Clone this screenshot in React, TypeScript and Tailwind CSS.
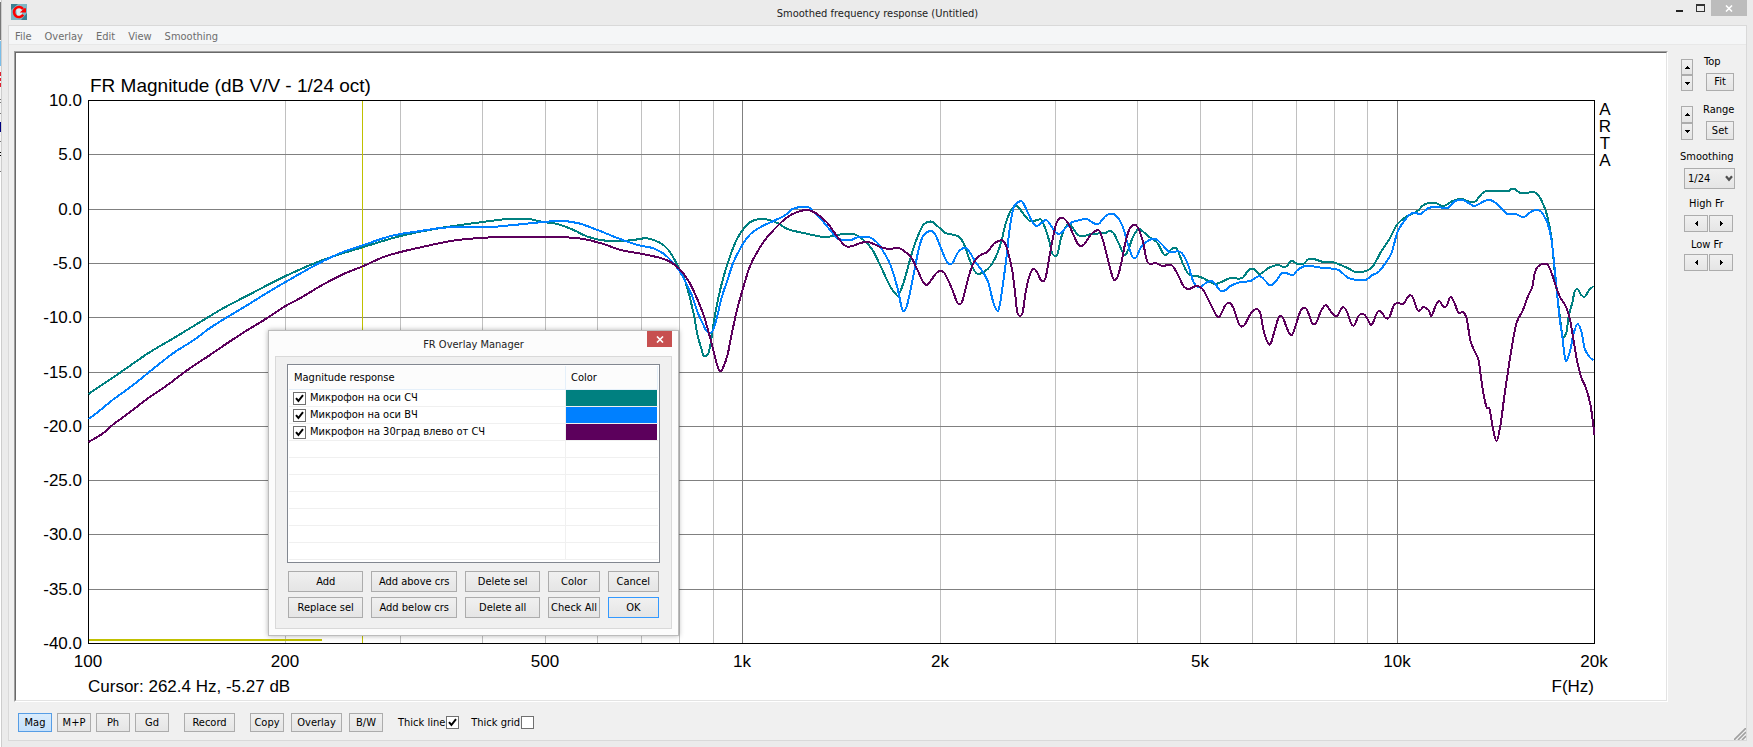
import React from "react";

type Point = [number, number];

interface Overlay {
  name: string;
  color: string;
  points: Point[];
}

const PLOT = { left: 88, right: 1594, top: 100, bottom: 643 };
const DECADE = (PLOT.right - PLOT.left) / Math.log10(200);

const overlays: Overlay[] = [
  {
    name: "Микрофон на оси СЧ",
    color: "#008080",
    points: [
      [88, 394], [122, 371], [148, 353], [175, 337], [208, 317], [223, 308], [250, 294], [285, 276],
      [325, 259], [363, 247], [400, 236], [440, 228], [482, 222], [507, 219], [518, 219], [528, 219],
      [543, 222], [557, 224], [573, 230], [588, 237], [607, 241], [622, 241], [640, 239], [645, 238], [658, 242],
      [668, 250], [678, 267], [685, 282], [693, 313], [697, 335], [701, 349], [703, 356], [708, 353], [711, 338],
      [714, 318], [718, 297], [723, 277], [730, 255], [737, 238], [743, 229], [750, 222], [758, 219], [765, 219],
      [777, 223], [787, 229], [803, 233], [823, 237], [833, 236], [842, 234], [853, 234], [863, 240], [872, 250],
      [880, 266], [890, 287], [896, 295], [898, 295], [903, 283], [910, 258], [915, 242], [922, 226], [927, 222],
      [932, 222], [938, 227], [945, 233], [957, 236], [963, 243], [968, 257], [974, 271], [979, 274], [990, 266],
      [997, 253], [1001, 241], [1005, 224], [1010, 211], [1014, 206], [1017, 206], [1023, 214], [1029, 221],
      [1033, 221], [1037, 220], [1041, 220], [1045, 229], [1049, 242], [1052, 254], [1057, 254], [1060, 240],
      [1064, 229], [1069, 224], [1075, 232], [1079, 236], [1084, 236], [1090, 234], [1105, 233], [1109, 231],
      [1113, 233], [1118, 243], [1124, 255], [1128, 249], [1132, 238], [1138, 229], [1143, 232], [1150, 238],
      [1157, 243], [1163, 254], [1167, 254], [1171, 249], [1176, 248], [1179, 255], [1183, 265], [1188, 274],
      [1200, 277], [1210, 282], [1215, 284], [1223, 281], [1230, 278], [1242, 278], [1248, 270], [1253, 269],
      [1259, 274], [1268, 268], [1277, 265], [1285, 267], [1291, 261], [1297, 264], [1303, 264], [1308, 259],
      [1313, 259], [1323, 262], [1332, 262], [1347, 268], [1355, 272], [1362, 272], [1371, 268], [1375, 262],
      [1381, 251], [1389, 239], [1397, 224], [1407, 216], [1417, 211], [1423, 205], [1429, 203], [1435, 203],
      [1443, 206], [1452, 201], [1461, 199], [1467, 201], [1474, 202], [1482, 193], [1487, 191], [1508, 191],
      [1511, 189], [1514, 189], [1520, 193], [1527, 193], [1531, 192], [1537, 194], [1543, 205], [1547, 217],
      [1551, 238], [1554, 270], [1557, 298], [1560, 322], [1562, 336], [1566, 332], [1568, 317], [1572, 302],
      [1574, 292], [1577, 289], [1580, 294], [1584, 297], [1588, 291], [1593, 286],
    ],
  },
  {
    name: "Микрофон на оси ВЧ",
    color: "#0080ff",
    points: [
      [88, 419], [100, 410], [112, 400], [130, 387], [150, 371], [173, 353], [195, 339], [208, 329],
      [227, 317], [247, 305], [263, 295], [285, 282], [317, 264], [340, 253], [363, 245], [387, 237], [400, 234],
      [420, 231], [440, 228], [457, 227], [490, 227], [513, 225], [533, 223], [558, 221], [577, 223], [597, 230],
      [617, 238], [637, 245], [652, 248], [662, 253], [670, 260], [679, 271], [685, 282], [692, 297], [697, 312],
      [702, 323], [706, 331], [710, 333], [713, 329], [717, 315], [721, 298], [727, 280], [733, 262], [743, 243],
      [750, 234], [762, 226], [773, 221], [785, 215], [792, 209], [800, 207], [808, 207], [813, 212], [823, 222],
      [832, 233], [838, 239], [850, 240], [858, 237], [868, 237], [875, 241], [880, 247], [890, 265], [897, 288],
      [902, 310], [906, 307], [910, 290], [914, 270], [918, 250], [922, 237], [927, 232], [931, 231], [935, 235],
      [940, 247], [945, 259], [948, 264], [952, 263], [957, 253], [963, 248], [967, 249], [975, 262], [983, 273],
      [988, 283], [993, 303], [998, 310], [1002, 287], [1006, 257], [1009, 230], [1013, 208], [1018, 202],
      [1022, 202], [1027, 212], [1032, 222], [1036, 226], [1041, 223], [1045, 220], [1048, 222], [1054, 231],
      [1059, 234], [1065, 228], [1072, 222], [1080, 220], [1086, 219], [1093, 223], [1098, 224], [1105, 216],
      [1110, 214], [1115, 215], [1122, 226], [1127, 243], [1132, 257], [1136, 257], [1140, 248], [1147, 241],
      [1155, 239], [1162, 245], [1169, 252], [1180, 252], [1187, 263], [1193, 282], [1199, 287], [1207, 282],
      [1213, 282], [1220, 291], [1225, 290], [1230, 286], [1240, 282], [1250, 281], [1259, 276], [1265, 281],
      [1269, 285], [1274, 283], [1282, 273], [1293, 275], [1297, 270], [1305, 266], [1323, 268], [1338, 270],
      [1348, 278], [1365, 280], [1372, 275], [1378, 272], [1385, 263], [1391, 253], [1397, 232], [1403, 222],
      [1410, 214], [1415, 213], [1420, 214], [1428, 208], [1437, 207], [1447, 208], [1455, 201], [1462, 200],
      [1468, 203], [1474, 206], [1482, 202], [1488, 200], [1494, 202], [1507, 214], [1515, 214], [1523, 217],
      [1532, 211], [1540, 211], [1544, 217], [1547, 223], [1551, 240], [1555, 277], [1559, 317], [1562, 338],
      [1565, 360], [1569, 353], [1573, 334], [1577, 324], [1581, 332], [1584, 348], [1589, 357], [1593, 360],
    ],
  },
  {
    name: "Микрофон на 30град влево от СЧ",
    color: "#5c005c",
    points: [
      [88, 442], [103, 433], [112, 425], [127, 414], [148, 398], [167, 385], [187, 370],
      [208, 356], [227, 343], [247, 330], [262, 321], [285, 306], [300, 298], [320, 286], [343, 274],
      [363, 266], [383, 257], [400, 252], [417, 248], [440, 243], [457, 240], [480, 238], [500, 237], [557, 237],
      [583, 239], [603, 244], [620, 250], [642, 254], [660, 258], [670, 262], [679, 269], [688, 281], [695, 295],
      [702, 312], [707, 328], [712, 347], [716, 363], [719, 371], [722, 369], [727, 355], [731, 335], [736, 312],
      [742, 290], [750, 265], [763, 242], [775, 228], [787, 217], [797, 212], [807, 210], [815, 213], [827, 223],
      [837, 237], [845, 246], [852, 246], [860, 243], [868, 242], [880, 247], [888, 249], [898, 248], [905, 252],
      [911, 258], [917, 270], [922, 281], [926, 285], [930, 281], [937, 272], [943, 272], [947, 279], [952, 290],
      [957, 303], [961, 303], [964, 293], [968, 277], [973, 263], [980, 255], [987, 252], [993, 244], [998, 241],
      [1003, 241], [1007, 250], [1012, 272], [1015, 297], [1017, 313], [1022, 313], [1025, 293], [1029, 276],
      [1033, 269], [1037, 273], [1041, 281], [1045, 278], [1048, 262], [1052, 240], [1056, 223], [1060, 218],
      [1063, 218], [1068, 224], [1073, 235], [1078, 245], [1083, 245], [1090, 235], [1095, 231], [1099, 231],
      [1103, 242], [1108, 262], [1113, 279], [1117, 277], [1121, 262], [1125, 242], [1129, 229], [1133, 225],
      [1137, 227], [1142, 240], [1147, 262], [1155, 263], [1162, 266], [1171, 265], [1177, 274], [1183, 286],
      [1188, 289], [1196, 286], [1202, 289], [1208, 300], [1217, 317], [1220, 315], [1225, 305], [1229, 303],
      [1233, 308], [1239, 325], [1244, 325], [1250, 314], [1256, 309], [1260, 314], [1263, 330], [1267, 342],
      [1270, 344], [1274, 331], [1278, 318], [1282, 317], [1286, 327], [1290, 335], [1293, 332], [1300, 311],
      [1305, 308], [1309, 316], [1312, 324], [1316, 322], [1320, 312], [1325, 305], [1328, 308], [1333, 315],
      [1337, 316], [1340, 310], [1343, 307], [1347, 313], [1351, 324], [1354, 325], [1358, 316], [1363, 314],
      [1367, 319], [1371, 325], [1377, 312], [1381, 312], [1385, 318], [1389, 317], [1393, 306], [1397, 303],
      [1403, 304], [1408, 296], [1412, 297], [1417, 310], [1420, 310], [1423, 307], [1428, 310], [1431, 316],
      [1435, 306], [1439, 301], [1443, 307], [1446, 306], [1450, 297], [1454, 303], [1458, 313], [1462, 312],
      [1466, 318], [1470, 341], [1475, 353], [1478, 360], [1482, 388], [1486, 407], [1489, 409], [1492, 426],
      [1496, 441], [1500, 425], [1504, 395], [1508, 368], [1512, 343], [1516, 323], [1522, 311], [1528, 295],
      [1532, 286], [1534, 274], [1538, 266], [1546, 264], [1550, 270], [1555, 285], [1559, 296], [1566, 308],
      [1570, 322], [1573, 340], [1577, 363], [1581, 378], [1585, 387], [1590, 405], [1594, 435],
    ],
  },
];

const freqX = (f: number) => Math.round(PLOT.left + DECADE * Math.log10(f / 100)) + 0.5;
const dbY = (db: number) => Math.round(PLOT.top + ((10 - db) / 50) * (PLOT.bottom - PLOT.top)) + 0.5;

const gridFreqs = [200, 300, 400, 500, 600, 700, 800, 900, 1000, 2000, 3000, 4000, 5000, 6000, 7000, 8000, 9000, 10000];
const gridDbs = [5, 0, -5, -10, -15, -20, -25, -30, -35];
const freqLabels: [number, string][] = [
  [100, "100"], [200, "200"], [500, "500"], [1000, "1k"], [2000, "2k"], [5000, "5k"], [10000, "10k"], [20000, "20k"],
];

// Bezier through every sample
function tracePath(pts: Point[]) {
  let d = `M${pts[0][0] + 0.5} ${pts[0][1]}`;
  for (let i = 0; i < pts.length - 1; i++) {
    const p0 = pts[i - 1] || pts[i];
    const p1 = pts[i];
    const p2 = pts[i + 1];
    const p3 = pts[i + 2] || p2;
    const s1 = (p2[1] - p0[1]) / (p2[0] - p0[0]);
    const s2 = (p3[1] - p1[1]) / (p3[0] - p1[0]);
    const h = (p2[0] - p1[0]) / 3;
    d += `C${p1[0] + h + 0.5} ${p1[1] + s1 * h} ${p2[0] - h + 0.5} ${p2[1] - s2 * h} ${p2[0] + 0.5} ${p2[1]}`;
  }
  return d;
}

const btn =
  "flex items-center justify-center border border-[#acacac] bg-linear-to-b from-[#f0f0f0] to-[#e5e5e5] whitespace-nowrap text-black";

function Button({ className = "", children }: { className?: string; children: React.ReactNode }) {
  return (
    <button type="button" className={`${btn} ${className}`}>
      {children}
    </button>
  );
}

function ArrowButton({ dir, className = "" }: { dir: "up" | "down" | "left" | "right"; className?: string }) {
  const shapes = {
    up: "M1 5h5v-1h-1v-1h-1v-1h-1v1h-1v1h-1z",
    down: "M1 2h5v1h-1v1h-1v1h-1v-1h-1v-1h-1z",
    left: "M5 1v5h-1v-1h-1v-1h-1v-1h1v-1h1v-1z",
    right: "M2 1v5h1v-1h1v-1h1v-1h-1v-1h-1v-1z",
  };
  return (
    <button type="button" aria-label={dir} className={`${btn} ${className}`}>
      <svg width="7" height="7" viewBox="0 0 7 7" shapeRendering="crispEdges">
        <path d={shapes[dir]} />
      </svg>
    </button>
  );
}

function CheckBox({ id, defaultChecked = false }: { id: string; defaultChecked?: boolean }) {
  return (
    <span className="relative block size-[13px] shrink-0">
      <input
        id={id}
        type="checkbox"
        defaultChecked={defaultChecked}
        className="peer block size-[13px] appearance-none border border-[#707070] bg-white"
      />
      <svg className="pointer-events-none absolute inset-0 hidden peer-checked:block" viewBox="0 0 13 13">
        <path d="M3 6.2 5.4 9 10 3.2" fill="none" stroke="#000" strokeWidth="2" />
      </svg>
    </span>
  );
}

function Chart() {
  return (
    <svg
      viewBox="16 53 1650 647"
      className="block w-full bg-white font-['Liberation_Sans',Arial,sans-serif] text-[17px]"
      role="img"
      aria-label="FR Magnitude"
    >
      <g shapeRendering="crispEdges" fill="none">
        {gridFreqs.map((f) => (
          <line
            key={f}
            x1={freqX(f)}
            x2={freqX(f)}
            y1={PLOT.top}
            y2={PLOT.bottom}
            stroke={f === 1000 || f === 10000 ? "#808080" : "#c0c0c0"}
          />
        ))}
        {gridDbs.map((db) => (
          <line key={db} x1={PLOT.left} x2={PLOT.right} y1={dbY(db)} y2={dbY(db)} stroke="#808080" />
        ))}
        <line x1="362.5" x2="362.5" y1={PLOT.top} y2={PLOT.bottom} stroke="#c0c000" />
        <line x1="89" x2="322" y1="640" y2="640" stroke="#c0c000" strokeWidth="2" />
        <rect x="88.5" y="100.5" width="1506" height="543" stroke="#000" />
        {overlays.map((o) => (
          <path key={o.color} d={tracePath(o.points)} stroke={o.color} strokeWidth="2" strokeLinejoin="round" />
        ))}
      </g>

      <text x="90" y="92" fontSize="19">
        FR Magnitude (dB V/V - 1/24 oct)
      </text>
      {[10, ...gridDbs, -40].map((db) => (
        <text key={db} x="82" y={Math.floor(dbY(db)) + 6} textAnchor="end">
          {db.toFixed(1)}
        </text>
      ))}
      {freqLabels.map(([f, label]) => (
        <text key={f} x={Math.floor(freqX(f))} y="667" textAnchor="middle">
          {label}
        </text>
      ))}
      <text x="88" y="692">
        Cursor: 262.4 Hz, -5.27 dB
      </text>
      <text x="1594" y="692" textAnchor="end">
        F(Hz)
      </text>
      {["A", "R", "T", "A"].map((c, i) => (
        <text key={i} x="1605" y={115 + i * 17} textAnchor="middle">
          {c}
        </text>
      ))}
    </svg>
  );
}

function OverlayManager() {
  const emptyRows = Array.from({ length: 7 });
  return (
    <section
      aria-label="FR Overlay Manager"
      className="absolute top-[278px] left-[253px] w-[411px] border border-[#bcbcbc] bg-[#fcfcfc] px-1.5 pb-1.5 shadow-[0_0_5px_rgba(0,0,0,0.3)]"
    >
      <header className="relative h-[25px] text-center leading-[27px] text-[#222]">
        <h2>FR Overlay Manager</h2>
        <button
          type="button"
          aria-label="Close"
          className="absolute top-0 right-0 flex h-4 w-[25px] items-center justify-center bg-[#c75050]"
        >
          <svg width="8" height="7" viewBox="0 0 8 7">
            <path d="M1 .5 7 6.5M7 .5 1 6.5" stroke="#fff" strokeWidth="1.6" />
          </svg>
        </button>
      </header>
      <div className="border border-[#d9d9d9] bg-[#f0f0f0] px-[11px] pt-[7px] pb-2.5">
        <div className="border border-[#828790] bg-white px-px pt-px pb-0.5">
          <table className="w-full table-fixed border-separate border-spacing-0 text-left">
            <thead className="bg-[#fcfcfc]">
              <tr className="h-6">
                <th scope="col" className="border-r border-b border-[#e5f0fa] p-0 pl-[5px] font-normal">
                  Magnitude response
                </th>
                <th scope="col" className="w-[92px] border-r border-b border-[#e5f0fa] p-0 pl-[5px] font-normal">
                  Color
                </th>
              </tr>
            </thead>
            <tbody>
              {overlays.map((o, i) => (
                <tr key={o.name} className="h-[17px]">
                  <td className="border-r border-b border-[#f0f0f0] p-0 pl-1">
                    <div className="flex items-center gap-1">
                      <CheckBox id={`overlay-${i}`} defaultChecked />
                      <label htmlFor={`overlay-${i}`}>{o.name}</label>
                    </div>
                  </td>
                  <td className="border-b border-[#f0f0f0] p-0 pr-px">
                    <div className="h-4" style={{ backgroundColor: o.color }} />
                  </td>
                </tr>
              ))}
              {emptyRows.map((_, i) => (
                <tr key={i} className="h-[17px]">
                  <td className="border-r border-b border-[#f0f0f0] p-0" />
                  <td className="border-b border-[#f0f0f0] p-0" />
                </tr>
              ))}
            </tbody>
          </table>
        </div>
        <div className="mt-2 grid grid-cols-[75fr_85fr_75fr_51fr_51fr] gap-x-2 gap-y-[5px] px-px">
          <Button className="h-[21px]">Add</Button>
          <Button className="h-[21px]">Add above crs</Button>
          <Button className="h-[21px]">Delete sel</Button>
          <Button className="h-[21px]">Color</Button>
          <Button className="h-[21px]">Cancel</Button>
          <Button className="h-[21px]">Replace sel</Button>
          <Button className="h-[21px]">Add below crs</Button>
          <Button className="h-[21px]">Delete all</Button>
          <Button className="h-[21px]">Check All</Button>
          <button
            type="button"
            className="flex h-[21px] items-center justify-center border border-[#3399ff] bg-linear-to-b from-[#f0f0f0] to-[#e5e5e5]"
          >
            OK
          </button>
        </div>
      </div>
    </section>
  );
}

function SidePanel() {
  return (
    <aside className="flex w-[78px] shrink-0 flex-col pt-1 pl-3">
      <div className="flex items-end gap-2.5 pl-px">
        <div className="flex flex-col">
          <ArrowButton dir="up" className="h-4 w-3" />
          <ArrowButton dir="down" className="h-4 w-3" />
        </div>
        <div className="flex w-[31px] flex-col items-end">
          <span className="w-full pb-1 pl-px">Top</span>
          <Button className="h-[18px] w-7">Fit</Button>
        </div>
      </div>
      <div className="mt-3 flex items-end gap-2.5 pl-px">
        <div className="flex flex-col">
          <ArrowButton dir="up" className="h-[17px] w-3" />
          <ArrowButton dir="down" className="h-[17px] w-3" />
        </div>
        <div className="flex w-[31px] flex-col items-end">
          <span className="w-full pb-1">Range</span>
          <Button className="h-[19px] w-7">Set</Button>
        </div>
      </div>
      <label htmlFor="smoothing" className="mt-2.5">
        Smoothing
      </label>
      <div className="relative mt-1 ml-1 w-[51px]">
        <select
          id="smoothing"
          defaultValue="1/24"
          className="block h-[21px] w-full appearance-none border border-[#acacac] bg-linear-to-b from-[#f0f0f0] to-[#e5e5e5] pl-[3px]"
        >
          <option>1/24</option>
          <option>1/12</option>
          <option>1/6</option>
          <option>1/3</option>
        </select>
        <svg className="pointer-events-none absolute top-[7px] right-0.5" width="8" height="7" viewBox="0 0 8 7">
          <path d="M1 1.2 4 4.8 7 1.2" fill="none" stroke="#505050" strokeWidth="2.2" />
        </svg>
      </div>
      <span className="mt-2 pl-[9px]">High Fr</span>
      <div className="mt-1 ml-1 flex gap-px">
        <ArrowButton dir="left" className="h-[17px] w-6" />
        <ArrowButton dir="right" className="h-[17px] w-6" />
      </div>
      <span className="mt-1.5 pl-[11px]">Low Fr</span>
      <div className="mt-0.5 ml-1 flex gap-px">
        <ArrowButton dir="left" className="h-[17px] w-6" />
        <ArrowButton dir="right" className="h-[17px] w-6" />
      </div>
    </aside>
  );
}

function Toolbar() {
  return (
    <div className="flex items-center pt-[11px] pb-2 pl-[9px]">
      <div className="flex gap-[5px]">
        <button
          type="button"
          aria-pressed="true"
          className="flex h-[19px] w-[34px] items-center justify-center border border-[#569de5] bg-linear-to-b from-[#daecfc] to-[#c4e0fc]"
        >
          Mag
        </button>
        <Button className="h-[19px] w-[34px]">M+P</Button>
        <Button className="h-[19px] w-[34px]">Ph</Button>
        <Button className="h-[19px] w-[34px]">Gd</Button>
      </div>
      <Button className="ml-[15px] h-[19px] w-[51px]">Record</Button>
      <div className="ml-[15px] flex gap-[7px]">
        <Button className="h-[19px] w-[34px]">Copy</Button>
        <Button className="h-[19px] w-[51px]">Overlay</Button>
        <Button className="h-[19px] w-[34px]">B/W</Button>
      </div>
      <div className="ml-[15px] flex gap-3">
        <div className="flex items-center gap-px">
          <label htmlFor="thick-line">Thick line</label>
          <CheckBox id="thick-line" defaultChecked />
        </div>
        <div className="flex items-center gap-px">
          <label htmlFor="thick-grid">Thick grid</label>
          <CheckBox id="thick-grid" />
        </div>
      </div>
      <svg className="mt-2 -mb-2 ml-auto self-end" width="12" height="12" viewBox="0 0 12 12">
        <path d="M0 12 12 0M4 12l8-8M8 12l4-4" stroke="#a0a0a0" strokeWidth="1.6" />
      </svg>
    </div>
  );
}

function TitleBar() {
  return (
    <header className="relative flex h-[25px] items-start justify-between pl-[9px]">
      <svg className="mt-1" width="16" height="16" viewBox="0 0 16 16" aria-hidden="true">
        <rect width="16" height="16" fill="#7fb6c4" />
        <path d="M0 0h7L0 6zM10 16h6V9z" fill="#3a7f92" />
        <path d="M5 4h6v8H6z" fill="#d8eef2" />
        <path d="M12.2 10.8A5 5 0 1 1 12 5" fill="none" stroke="#f00" strokeWidth="2.6" />
        <path d="M8.8 8.4h6.2V4.2h-1.6z" fill="#f00" />
      </svg>
      <h1 className="absolute inset-x-0 top-0 text-center leading-[27px] text-[#222]">
        Smoothed frequency response (Untitled)
      </h1>
      <div className="relative mr-1.5 flex">
        <button type="button" aria-label="Minimize" className="flex h-4 w-5 items-end justify-start pb-1">
          <span className="block h-0.5 w-[7px] bg-[#222]" />
        </button>
        <button type="button" aria-label="Maximize" className="flex h-4 w-[15px] items-end justify-start pb-1">
          <span className="block h-2 w-[9px] border border-t-2 border-[#333]" />
        </button>
        <button type="button" aria-label="Close" className="flex h-4 w-9 items-center justify-center bg-[#bcbcbc]">
          <svg width="8" height="7" viewBox="0 0 8 7">
            <path d="M1 .5 7 6.5M7 .5 1 6.5" stroke="#fff" strokeWidth="1.6" />
          </svg>
        </button>
      </div>
    </header>
  );
}

export default function App() {
  return (
    <div className="flex min-h-screen bg-white font-['DejaVu_Sans_Condensed','DejaVu_Sans',sans-serif] text-[11px] leading-[14px] text-black">
      {/* sliver of the window behind */}
      <svg className="shrink-0 bg-[#f4f4f4]" width="1" height="172" viewBox="0 0 1 172" shapeRendering="crispEdges">
        <path d="M0 2h1v38h-1z" fill="#777" />
        <path d="M0 41h1v25h-1z" fill="#79bde8" />
        <path d="M0 72h1v4h-1zM0 78h1v3h-1zM0 83h1v4h-1z" fill="#e02030" />
        <path d="M0 99h1v1h-1zM0 102h1v1h-1zM0 113h1v1h-1zM0 141h1v1h-1zM0 171h1v1h-1z" fill="#777" />
        <path d="M0 122h1v10h-1z" fill="#000080" />
        <path d="M0 152h1v1h-1zM0 155h1v1h-1z" fill="#000" />
      </svg>
      <div className="flex min-w-0 flex-1 flex-col border-l border-[#cdcdcd] bg-[#ebebeb]">
        <TitleBar />
        <div className="mr-1.5 mb-1.5 ml-1.5 flex flex-1 flex-col border border-[#d9d9d9] bg-[#f0f0f0]">
          <nav className="flex h-[19px] items-center gap-[13px] border-b border-[#e8e8e8] bg-[#f5f6f7] pt-[3px] pl-1.5 text-[#6d6d6d]">
            <button type="button">File</button>
            <button type="button">Overlay</button>
            <button type="button">Edit</button>
            <button type="button">View</button>
            <button type="button">Smoothing</button>
          </nav>
          <main className="flex items-start pt-1.5 pl-[5px]">
            <div className="relative min-w-0 flex-1 border-t border-r border-b border-l border-t-[#a0a0a0] border-r-white border-b-white border-l-[#a0a0a0]">
              <div className="border border-t-[#696969] border-r-[#e3e3e3] border-b-[#e3e3e3] border-l-[#696969]">
                <Chart />
              </div>
              <OverlayManager />
            </div>
            <SidePanel />
          </main>
          <Toolbar />
        </div>
      </div>
    </div>
  );
}
